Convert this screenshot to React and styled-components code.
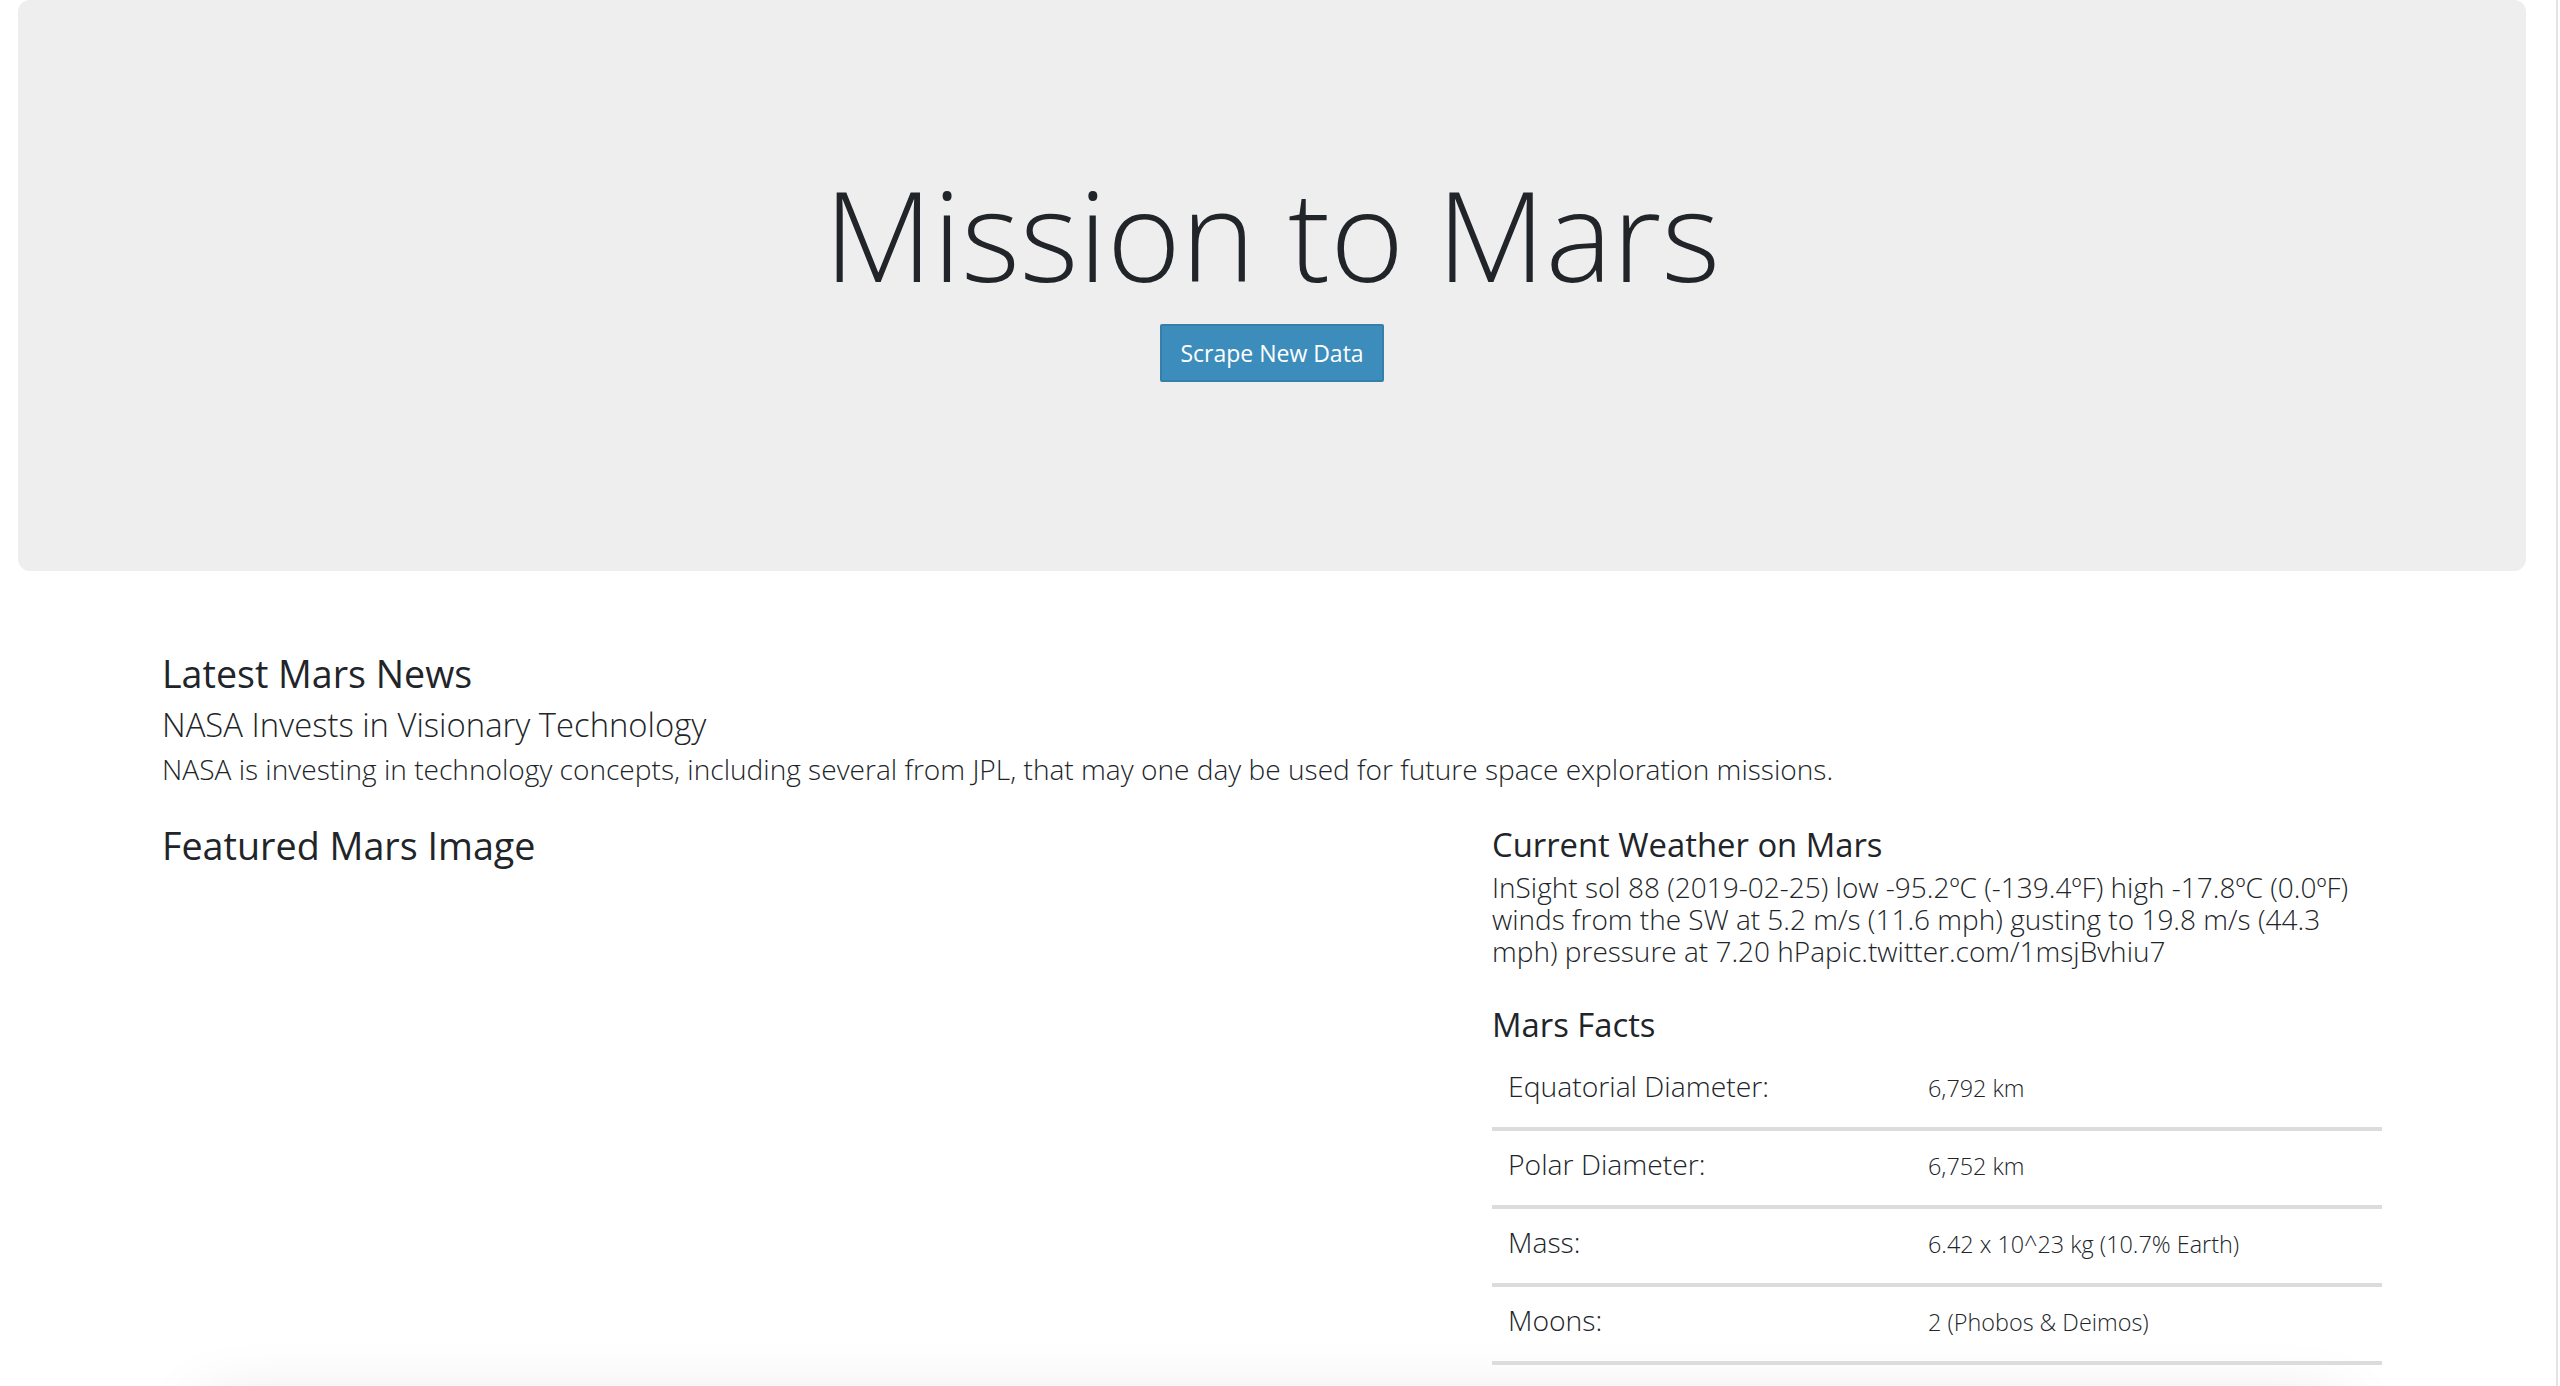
import React from "react";
import styled, { createGlobalStyle } from "styled-components";

const GlobalStyle = createGlobalStyle`
  html, body {
    margin: 0;
    padding: 0;
    background: #ffffff;
    overflow: hidden;
  }
  body {
    font-family: "Open Sans", "Noto Sans", "Liberation Sans", sans-serif;
    color: #212529;
  }
  * { box-sizing: border-box; }
`;

const Page = styled.div`
  margin-right: 16px;
`;

const ScrollTrack = styled.div`
  position: fixed;
  top: 0;
  bottom: 0;
  right: 2px;
  width: 2px;
  background: #e4e4e4;
`;

const Jumbotron = styled.header`
  margin: 0 18px;
  background: #eeeeee;
  border-radius: 12px;
  padding: 164px 0 189px;
  display: flex;
  flex-direction: column;
  align-items: center;
`;

const Title = styled.h1`
  margin: 0;
  font-size: 126px;
  line-height: 138.6px;
  font-weight: 300;
  color: #212529;
`;

const ScrapeButton = styled.button`
  margin-top: 21px;
  font-family: inherit;
  font-size: 23px;
  line-height: 34px;
  font-weight: 400;
  color: #ffffff;
  background: #3c8dbc;
  border: 2px solid #367fa9;
  border-radius: 2px;
  padding: 10px 18px;
  cursor: pointer;
`;

const Container = styled.main`
  width: 2220px;
  margin: 0 auto;
  padding-top: 81px;
`;

const SectionTitle = styled.h4`
  margin: 0;
  font-size: ${(p) => p.$size || 37.6}px;
  line-height: ${(p) => p.$lh || 44}px;
  font-weight: 400;
  color: #212529;
  margin-top: ${(p) => p.$mt || 0}px;
`;

const Headline = styled.h5`
  margin: 9px 0 0;
  font-size: 32.8px;
  line-height: 40px;
  font-weight: 300;
  color: #212529;
`;

const Teaser = styled.p`
  margin: 7px 0 0;
  font-size: 28.1px;
  line-height: 34px;
  font-weight: 300;
  color: #212529;
`;

const Row = styled.section`
  display: grid;
  grid-template-columns: 1fr 890px;
  column-gap: 60px;
  margin-top: 36px;
`;

const Column = styled.div`
  display: flex;
  flex-direction: column;
  padding-top: ${(p) => p.$pt || 0}px;
`;

const WeatherText = styled.p`
  margin: 8px 0 0;
  font-size: 28px;
  line-height: 32.2px;
  font-weight: 300;
  color: #212529;
`;

const FactsTable = styled.div`
  margin-top: 8px;
  display: flex;
  flex-direction: column;
`;

const FactRow = styled.div`
  display: grid;
  grid-template-columns: 420px 1fr;
  align-items: baseline;
  padding: 11px 0 17px;
  border-bottom: 4px solid #dcdcdc;
`;

const FactLabel = styled.div`
  padding-left: 16px;
  font-size: 28.3px;
  line-height: 44px;
  font-weight: 300;
  color: #212529;
`;

const FactValue = styled.div`
  padding-left: 16px;
  font-size: 23.4px;
  line-height: 44px;
  font-weight: 300;
  color: #212529;
`;

const Footer = styled.footer`
  margin: 40px 40px 0;
  height: 240px;
  background: #ffffff;
  box-shadow: 0 0 64px rgba(0, 0, 0, 0.12);
`;

const facts = [
  ["Equatorial Diameter:", "6,792 km"],
  ["Polar Diameter:", "6,752 km"],
  ["Mass:", "6.42 x 10^23 kg (10.7% Earth)"],
  ["Moons:", "2 (Phobos & Deimos)"],
];

export default function App() {
  return (
    <>
      <GlobalStyle />
      <ScrollTrack />
      <Page>
        <Jumbotron>
          <Title>Mission to Mars</Title>
          <ScrapeButton type="button">Scrape New Data</ScrapeButton>
        </Jumbotron>
        <Container>
          <SectionTitle>Latest Mars News</SectionTitle>
          <Headline>NASA Invests in Visionary Technology</Headline>
          <Teaser>
            NASA is investing in technology concepts, including several from JPL,
            that may one day be used for future space exploration missions.
          </Teaser>
          <Row>
            <Column>
              <SectionTitle $size={37.7} $lh={48}>Featured Mars Image</SectionTitle>
            </Column>
            <Column $pt={5}>
              <SectionTitle $size={32.8} $lh={36}>Current Weather on Mars</SectionTitle>
              <WeatherText>
                InSight sol 88 (2019-02-25) low -95.2ºC (-139.4ºF) high -17.8ºC (0.0ºF)
                winds from the SW at 5.2 m/s (11.6 mph) gusting to 19.8 m/s (44.3 mph)
                pressure at 7.20 hPapic.twitter.com/1msjBvhiu7
              </WeatherText>
              <SectionTitle $size={32.8} $lh={40} $mt={38}>Mars Facts</SectionTitle>
              <FactsTable>
                {facts.map(([label, value]) => (
                  <FactRow key={label}>
                    <FactLabel>{label}</FactLabel>
                    <FactValue>{value}</FactValue>
                  </FactRow>
                ))}
              </FactsTable>
            </Column>
          </Row>
          <Footer />
        </Container>
      </Page>
    </>
  );
}
